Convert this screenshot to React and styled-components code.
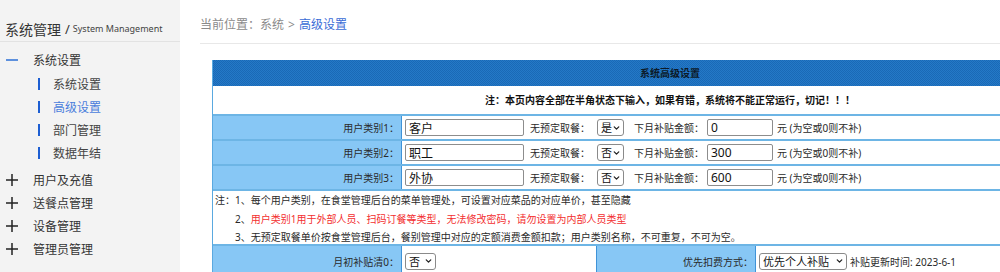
import React from "react"
import styled, { createGlobalStyle } from "styled-components"
import { ChevronDown } from "lucide-react"

const GlobalStyle = createGlobalStyle`
  html, body {
    margin: 0;
    padding: 0;
    overflow: hidden;
    background: #fff;
  }
  body {
    font-family: "Noto Sans", "Noto Sans CJK SC", sans-serif;
    color: #333;
  }
`

const Page = styled.div`
  display: flex;
  width: 1000px;
  height: 272px;
  overflow: hidden;
`

const Sidebar = styled.aside`
  flex: 0 0 180px;
  background: #f3f3f3;
`

const SideTitle = styled.div`
  height: 42px;
  padding: 16px 0 0 5px;
  box-sizing: border-box;
  display: flex;
  align-items: center;
  border-bottom: 1px solid #e2e2e2;
  font-size: 14px;
  color: #333;
  white-space: nowrap;
`

const Slash = styled.span`
  margin: 0 3px 0 4px;
  font-size: 13px;
`

const SideSub = styled.span`
  font-size: 9px;
  color: #444;
`

const Menu = styled.nav`
  padding-top: 6px;
`

const GroupHead = styled.div`
  height: 23px;
  display: flex;
  align-items: center;
  padding-left: 6px;
  font-size: 12px;
  color: #333;
  svg {
    margin-right: 15px;
  }
`

const SubList = styled.div`
  padding: 1px 0 4px;
`

const SubItem = styled.div`
  height: 23px;
  display: flex;
  align-items: center;
  padding-left: 38px;
  font-size: 12px;
  color: ${p => (p.$active ? "#4a7ddc" : "#444")};
  &::before {
    content: "";
    width: 2px;
    height: 12px;
    background: #1d5ed2;
    margin-right: 13px;
  }
`

const Toggle = ({ open }) => (
  <svg width="12" height="12" viewBox="0 0 12 12">
    <path d="M0 6h12" stroke={open ? "#2b6fd6" : "#222"} strokeWidth="1.5" />
    {!open && <path d="M6 0v12" stroke="#222" strokeWidth="1.5" />}
  </svg>
)

const Main = styled.main`
  flex: 1;
  padding-left: 20px;
  min-width: 0;
`

const Crumb = styled.div`
  height: 44px;
  box-sizing: border-box;
  padding-top: 17px;
  line-height: 16px;
  font-size: 12px;
  color: #8a8a8a;
  border-bottom: 1px solid #e8e8e8;
  white-space: nowrap;
`

const CrumbSep = styled.span`
  margin: 0 4px;
`

const CrumbActive = styled.span`
  color: #3a6cd6;
`

const Panel = styled.div`
  margin: 16px 0 0 12px;
  width: 914px;
  border-left: 1px solid #5aa9e0;
  font-size: 10px;
  color: #222;
`

const PanelHead = styled.div`
  height: 26px;
  line-height: 26px;
  text-align: center;
  font-size: 10px;
  font-weight: 700;
  color: #0c1a28;
  background-color: #1f72c1;
  background-image: repeating-conic-gradient(#1a69b6 0 25%, #2479c7 0 50%);
  background-size: 2px 2px;
`

const Notice = styled.div`
  height: 28px;
  line-height: 28px;
  text-align: center;
  font-weight: 700;
  color: #111;
`

const Row = styled.div`
  display: flex;
  height: ${p => p.$h || 23}px;
  border-top: 2px solid #6db5e5;
`

const Label = styled.div`
  flex: 0 0 ${p => p.$w || 186}px;
  background: #87c7f5;
  border-right: 1px solid #3f93d8;
  border-left: ${p => (p.$edge ? "1px solid #3f93d8" : "none")};
  display: flex;
  align-items: center;
  justify-content: flex-end;
  padding-right: 2px;
  color: #2a2a2a;
  white-space: nowrap;
`

const Value = styled.div`
  flex: ${p => (p.$w ? `0 0 ${p.$w}px` : "1")};
  display: flex;
  align-items: center;
  padding-left: 3px;
  box-sizing: border-box;
  white-space: nowrap;
`

const Text = styled.span`
  margin-left: ${p => p.$ml || 0}px;
  color: #2a2a2a;
`

const Field = styled.input`
  width: ${p => p.$w}px;
  height: 17px;
  box-sizing: border-box;
  margin: 0 0 0 ${p => p.$ml || 0}px;
  padding: 0 3px;
  border: 1px solid #8d8d8d;
  border-radius: 2px;
  font: 12px "Noto Sans", "Noto Sans CJK SC", sans-serif;
  color: #111;
  outline: none;
`

const SelectWrap = styled.span`
  position: relative;
  display: inline-flex;
  width: ${p => p.$w}px;
  margin-left: ${p => p.$ml || 0}px;
  svg {
    position: absolute;
    right: 3px;
    top: 50%;
    transform: translateY(-50%);
    pointer-events: none;
  }
`

const SelectBox = styled.select`
  appearance: none;
  width: 100%;
  height: 17px;
  box-sizing: border-box;
  margin: 0;
  padding: 0 0 0 3px;
  border: 1px solid #8a8a8a;
  border-radius: 3px;
  background: #fff;
  font: 11px "Noto Sans", "Noto Sans CJK SC", sans-serif;
  color: #111;
  line-height: 15px;
`

const Select = ({ w, ml, value, options }) => (
  <SelectWrap $w={w} $ml={ml}>
    <SelectBox defaultValue={value}>
      {options.map(o => (
        <option key={o}>{o}</option>
      ))}
    </SelectBox>
    <ChevronDown size={9} strokeWidth={3.5} color="#222" />
  </SelectWrap>
)

const Notes = styled.div`
  height: 53px;
  border-top: 2px solid #6db5e5;
  padding-left: 2px;
  line-height: 18.5px;
  color: #2a2a2a;
`

const NoteLine = styled.div`
  padding-left: ${p => (p.$indent ? 20 : 0)}px;
  white-space: nowrap;
`

const Warn = styled.span`
  color: #f32f2f;
`

const userTypes = [
  { no: 1, name: "客户", meal: "是", amount: "0" },
  { no: 2, name: "职工", meal: "否", amount: "300" },
  { no: 3, name: "外协", meal: "否", amount: "600" },
]

export default function App() {
  return (
    <>
      <GlobalStyle />
      <Page>
        <Sidebar>
          <SideTitle>
            系统管理<Slash>/</Slash>
            <SideSub>System Management</SideSub>
          </SideTitle>
          <Menu>
            <GroupHead>
              <Toggle open />
              系统设置
            </GroupHead>
            <SubList>
              <SubItem>系统设置</SubItem>
              <SubItem $active>高级设置</SubItem>
              <SubItem>部门管理</SubItem>
              <SubItem>数据年结</SubItem>
            </SubList>
            {["用户及充值", "送餐点管理", "设备管理", "管理员管理"].map(t => (
              <GroupHead key={t}>
                <Toggle />
                {t}
              </GroupHead>
            ))}
          </Menu>
        </Sidebar>
        <Main>
          <Crumb>
            当前位置：系统<CrumbSep>&gt;</CrumbSep>
            <CrumbActive>高级设置</CrumbActive>
          </Crumb>
          <Panel>
            <PanelHead>系统高级设置</PanelHead>
            <Notice>注：本页内容全部在半角状态下输入，如果有错，系统将不能正常运行，切记！！！</Notice>
            {userTypes.map(u => (
              <Row key={u.no}>
                <Label>用户类别{u.no}：</Label>
                <Value>
                  <Field $w={119} defaultValue={u.name} />
                  <Text $ml={6}>无预定取餐：</Text>
                  <Select w={27} ml={7} value={u.meal} options={["是", "否"]} />
                  <Text $ml={10}>下月补贴金额：</Text>
                  <Field $w={66} $ml={3} defaultValue={u.amount} />
                  <Text $ml={4}>元 (为空或0则不补)</Text>
                </Value>
              </Row>
            ))}
            <Notes>
              <NoteLine>注：1、每个用户类别，在食堂管理后台的菜单管理处，可设置对应菜品的对应单价，甚至隐藏</NoteLine>
              <NoteLine $indent>
                2、<Warn>用户类别1用于外部人员、扫码订餐等类型，无法修改密码，请勿设置为内部人员类型</Warn>
              </NoteLine>
              <NoteLine $indent>
                3、无预定取餐单价按食堂管理后台，餐别管理中对应的定额消费金额扣款；用户类别名称，不可重复，不可为空。
              </NoteLine>
            </Notes>
            <Row $h={30}>
              <Label>月初补贴清0：</Label>
              <Value $w={194}>
                <Select w={31} value="否" options={["是", "否"]} />
              </Value>
              <Label $w={156} $edge>
                优先扣费方式：
              </Label>
              <Value>
                <Select w={88} value="优先个人补贴" options={["优先个人补贴", "优先个人余额"]} />
                <Text $ml={3}>补贴更新时间: 2023-6-1</Text>
              </Value>
            </Row>
          </Panel>
        </Main>
      </Page>
    </>
  )
}
